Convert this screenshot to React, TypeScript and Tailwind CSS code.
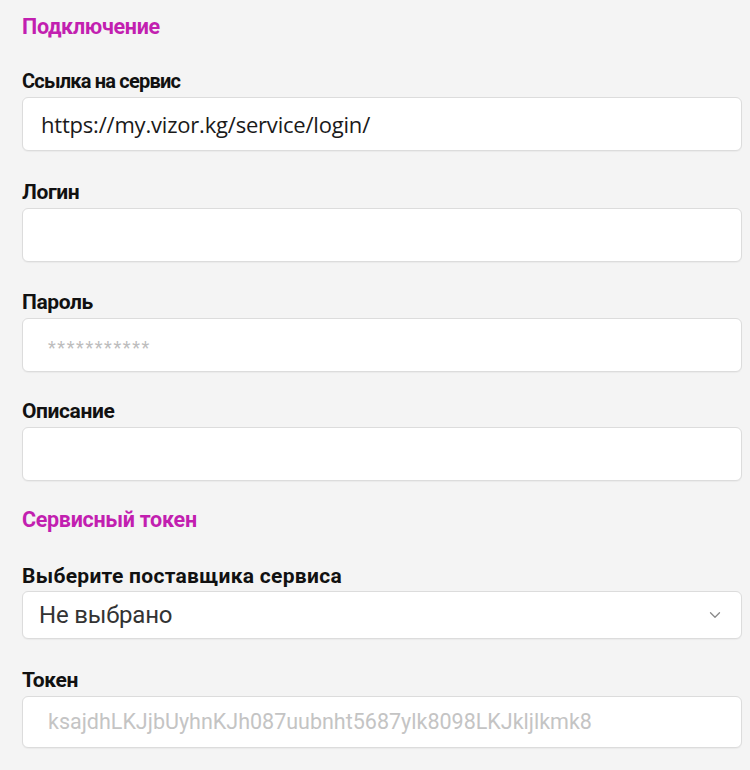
import { ChevronDown } from "lucide-react";

const label = "text-[21px] leading-6 font-bold text-[#111] tracking-[-0.4px]";
const box = "rounded-[6px] border border-[#dcdcdc] bg-white shadow-[0_1px_1px_rgba(0,0,0,0.04)]";

function Field({
  title,
  children,
  className = "",
  labelClass = "",
}: {
  title: string;
  children?: React.ReactNode;
  className?: string;
  labelClass?: string;
}) {
  return (
    <div className={className}>
      <p className={`${label} ${labelClass}`}>{title}</p>
      <div className={`${box} mt-1 flex h-[54px] items-center`}>{children}</div>
    </div>
  );
}

export default function App() {
  return (
    <div
      className="h-[770px] w-[750px] overflow-hidden bg-[#f4f4f4] pl-[22px] pr-[8px] pt-[13px]"
      style={{ fontFamily: "Roboto, 'Noto Sans', sans-serif" }}
    >
      <h2 className="text-[21.5px] leading-7 font-bold tracking-[-0.3px] text-[#c21fb0]">Подключение</h2>

      {/* the first label is a bit narrower in the screenshot */}
      <Field title="Ссылка на сервис" className="mt-[28px]" labelClass="!text-[20px] !tracking-[-0.8px]">
        <span className="pl-[18px] text-[22px] tracking-[-0.2px] text-[#1a1a1a]" style={{ fontFamily: "'Open Sans', sans-serif" }}>
          https://my.vizor.kg/service/login/
        </span>
      </Field>

      <Field title="Логин" className="mt-[29px]" />

      <Field title="Пароль" className="mt-[28px]">
        <span className="pl-[25px] pt-1 text-[18px] tracking-[1.6px] text-[#bdbdbd]">***********</span>
      </Field>

      <Field title="Описание" className="mt-[27px]" />

      <h2 className="mt-[25px] text-[21.5px] leading-7 font-bold tracking-[-0.3px] text-[#c21fb0]">Сервисный токен</h2>

      <div className="mt-[30px]">
        <p className={`${label} !tracking-[0.3px]`}>Выберите поставщика сервиса</p>
        <div className={`${box} mt-[3px] flex h-[48px] items-center justify-between pl-[16px] pr-[17px]`}>
          <span className="text-[24px] tracking-[-0.2px] text-[#333]">Не выбрано</span>
          <ChevronDown className="h-[18px] w-[18px] text-[#8a8a8a]" strokeWidth={1.75} />
        </div>
      </div>

      <div className="mt-[29px]">
        <p className={label}>Токен</p>
        <div className={`${box} mt-1 flex h-[52px] items-center pl-[25px]`}>
          <span className="text-[21.5px] text-[#c4c4c4]">ksajdhLKJjbUyhnKJh087uubnht5687ylk8098LKJkljlkmk8</span>
        </div>
      </div>
    </div>
  );
}
